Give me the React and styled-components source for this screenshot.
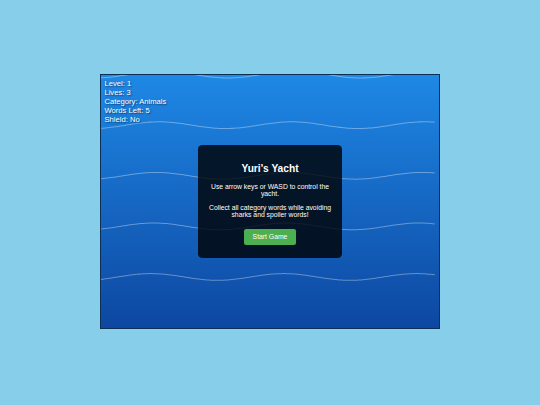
import React from "react";
import styled, { createGlobalStyle } from "styled-components";

const s = 0.425;
const px = (v) => `${(v * s).toFixed(3)}px`;

const Global = createGlobalStyle`
  html, body { margin: 0; padding: 0; }
  body {
    background: #87ceeb;
    font-family: "Liberation Sans", Arial, sans-serif;
    min-height: 100vh;
  }
`;

const Page = styled.div`
  width: 540px;
  height: 405px;
  display: flex;
  align-items: center;
  justify-content: center;
`;

const GameArea = styled.div`
  position: relative;
  box-sizing: border-box;
  width: 340px;
  height: 255px;
  margin-top: -2px;
  border: 1.5px solid #0c2f52;
  background: linear-gradient(180deg, #1e88e5 0%, #0d47a1 100%);
  overflow: hidden;
  display: flex;
  align-items: center;
  justify-content: center;
`;

const Waves = styled.svg`
  position: absolute;
  inset: 0;
  width: 100%;
  height: 100%;
`;

const Hud = styled.div`
  position: absolute;
  top: 3.5px;
  left: ${px(8)};
  color: #fff;
  font-size: ${px(18)};
  line-height: 9px;
  text-shadow: 1px 1px 1.5px rgba(0, 0, 0, 0.55);
`;

const HudLine = styled.div``;

const Panel = styled.div`
  position: relative;
  box-sizing: border-box;
  width: 144px;
  padding: 9.5px ${px(20)} 9px;
  background: rgba(0, 0, 0, 0.8);
  border-radius: ${px(10)};
  color: #fff;
  text-align: center;
`;

const Title = styled.h2`
  font-size: ${px(24)};
  font-weight: bold;
  margin: ${px(20)} 0;
  line-height: normal;
`;

const Text = styled.p`
  font-size: ${px(16)};
  margin: ${px(16)} 0;
  line-height: normal;
`;

const Button = styled.button`
  display: inline-block;
  margin: ${px(10)};
  padding: 4px ${px(20)};
  background: #4caf50;
  color: #fff;
  border: none;
  border-radius: ${px(5)};
  font-family: "Liberation Sans", Arial, sans-serif;
  font-size: ${px(16)};
  line-height: 8px;
  cursor: pointer;
`;

function wavePath(base, phase) {
  let d = "";
  for (let x = 0; x <= 790; x += 5) {
    const y = base + 8 * Math.sin(0.02 * x + phase);
    d += (x === 0 ? "M" : "L") + x + " " + y.toFixed(2) + " ";
  }
  return d;
}

export default function App() {
  const waves = [0, 1, 2, 3, 4].map((i) => wavePath(i * 120 - 1, 1.85 + 0.125 * i));
  return (
    <>
      <Global />
      <Page>
        <GameArea>
          <Waves viewBox="0 0 800 600" preserveAspectRatio="none">
            {waves.map((d, i) => (
              <path key={i} d={d} fill="none" stroke="rgba(255,255,255,0.35)" strokeWidth="2.4" />
            ))}
          </Waves>
          <Hud>
            <HudLine>Level: 1</HudLine>
            <HudLine>Lives: 3</HudLine>
            <HudLine>Category: Animals</HudLine>
            <HudLine>Words Left: 5</HudLine>
            <HudLine>Shield: No</HudLine>
          </Hud>
          <Panel>
            <Title>Yuri's Yacht</Title>
            <Text>Use arrow keys or WASD to control the yacht.</Text>
            <Text>Collect all category words while avoiding sharks and spoiler words!</Text>
            <Button>Start Game</Button>
          </Panel>
        </GameArea>
      </Page>
    </>
  );
}
